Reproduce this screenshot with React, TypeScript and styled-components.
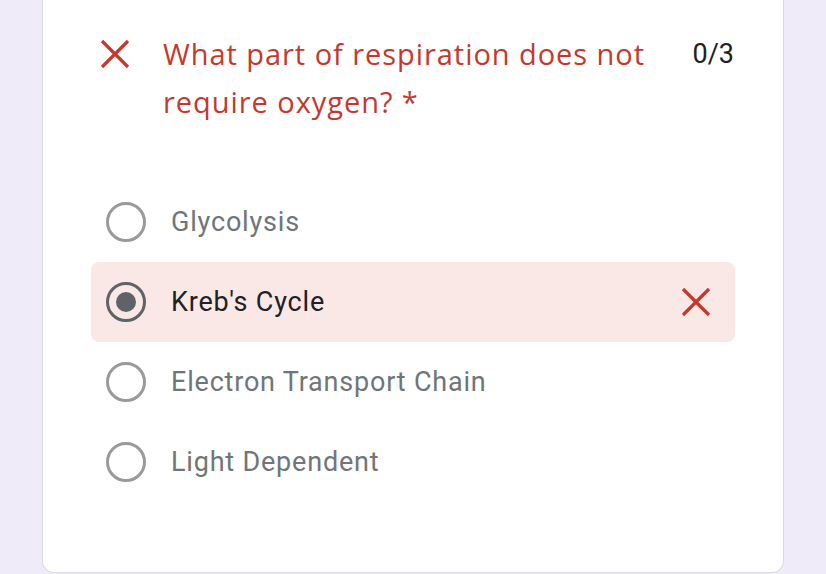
import styled, { createGlobalStyle } from "styled-components";

const GlobalStyle = createGlobalStyle`
  html, body {
    margin: 0;
    padding: 0;
    background: #f0ebf8;
    font-family: Roboto, "Noto Sans", Arial, sans-serif;
  }
`;

const Page = styled.div`
  width: 826px;
  height: 574px;
  overflow: hidden;
  padding-left: 42px;
  box-sizing: border-box;
`;

const Card = styled.div`
  width: 742px;
  height: 573px;
  box-sizing: border-box;
  background: #fff;
  border: 1px solid #dadce0;
  border-top: none;
  border-radius: 0 0 12px 12px;
  padding: 30px 48px 0 48px;
`;

const Header = styled.div`
  display: flex;
  align-items: flex-start;
  padding-left: 9px;
`;

const MarkBox = styled.div`
  width: 30px;
  height: 48px;
  display: flex;
  align-items: center;
  justify-content: center;
  margin-right: 33px;
`;

const Title = styled.div`
  flex: 1;
  font-family: "Open Sans", Roboto, sans-serif;
  font-size: 29px;
  letter-spacing: 0.95px;
  line-height: 48px;
  color: #c5392c;
`;

const Score = styled.div`
  font-size: 27px;
  line-height: 48px;
  color: #202124;
  margin-left: 36px;
  margin-right: 1px;
`;

const Options = styled.div`
  margin-top: 56px;
  display: flex;
  flex-direction: column;
`;

const Option = styled.div<{ $wrong?: boolean }>`
  height: 80px;
  display: flex;
  align-items: center;
  padding: 0 24px 0 15px;
  border-radius: 8px;
  background: ${(p) => (p.$wrong ? "#fae8e6" : "transparent")};
`;

const Radio = styled.div<{ $checked?: boolean }>`
  width: 40px;
  height: 40px;
  box-sizing: border-box;
  border-radius: 50%;
  border: 3px solid ${(p) => (p.$checked ? "#5f6368" : "#9a9a9e")};
  display: flex;
  align-items: center;
  justify-content: center;
  flex-shrink: 0;

  &::after {
    content: "";
    display: ${(p) => (p.$checked ? "block" : "none")};
    width: 20px;
    height: 20px;
    border-radius: 50%;
    background: #5f6368;
  }
`;

const Label = styled.div<{ $wrong?: boolean }>`
  flex: 1;
  margin-left: 25px;
  font-size: 27px;
  letter-spacing: 0.8px;
  color: ${(p) => (p.$wrong ? "#202124" : "#70757a")};
`;

function Cross() {
  return (
    <svg width={30} height={30} viewBox="0 0 30 30">
      <path
        d="M2 2 L28 28 M28 2 L2 28"
        stroke="#c5392c"
        strokeWidth="3.2"
        fill="none"
      />
    </svg>
  );
}

const options = [
  { label: "Glycolysis" },
  { label: "Kreb's Cycle", picked: true },
  { label: "Electron Transport Chain" },
  { label: "Light Dependent" },
];

export default function App() {
  return (
    <>
      <GlobalStyle />
      <Page>
        <Card>
          <Header>
            <MarkBox>
              <Cross />
            </MarkBox>
            <Title>What part of respiration does not require oxygen? *</Title>
            <Score>0/3</Score>
          </Header>
          <Options>
            {options.map((o) => (
              <Option key={o.label} $wrong={o.picked}>
                <Radio $checked={o.picked} />
                <Label $wrong={o.picked}>{o.label}</Label>
                {o.picked && <Cross />}
              </Option>
            ))}
          </Options>
        </Card>
      </Page>
    </>
  );
}
